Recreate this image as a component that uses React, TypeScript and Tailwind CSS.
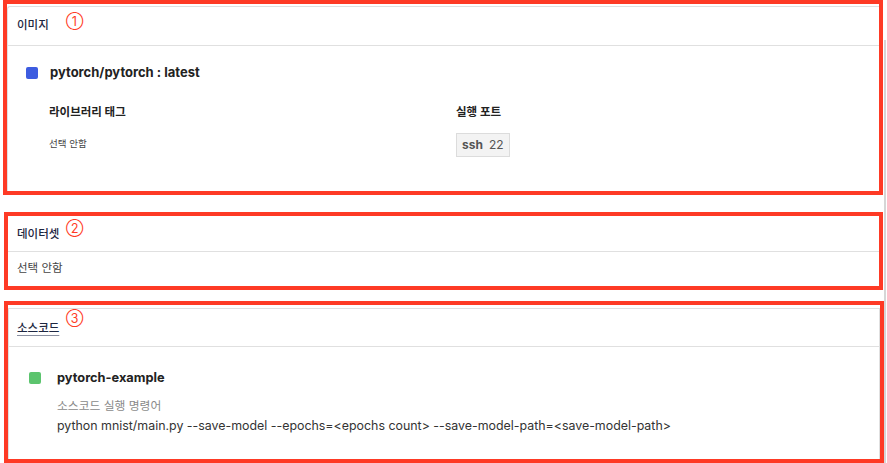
import React from 'react';

const font = { fontFamily: 'Inter, "Noto Sans CJK KR", sans-serif' };

const Mark: React.FC<{ n: string; className?: string }> = ({ n, className = '' }) => (
  <span className={`absolute text-[12.5px] leading-none text-[#ff3b25] ${className}`}>{n}</span>
);

export default function App() {
  return (
    <div className="w-[887px] h-[463px] bg-white flex overflow-hidden text-[#222]" style={font}>
      <div className="w-[884px] flex flex-col">
        {/* 이미지 */}
        <section className="relative ml-[3px] w-[880px] h-[195px] border-4 border-[#fe3a25] pt-[2px]">
          <div className="h-full border-t border-l border-[#e0e0e0] rounded-tl-[3px]">
            <div className="h-[39px] border-b border-[#e0e0e0] flex items-center pl-[9px]">
              <span className="text-[11.5px] font-medium text-[#1d2640]">이미지</span>
            </div>
            <div className="pt-[18px] pl-[18px]">
              <div className="flex items-center gap-[12px] h-[18px]">
                <span className="w-[12px] h-[12px] rounded-[2px] bg-[#3d5ce0]" />
                <span className="text-[13px] font-bold text-[#222]">pytorch/pytorch : latest</span>
              </div>
              <div className="mt-[21px] pl-[23px] grid grid-cols-[407px_1fr] gap-y-[10px] items-center">
                <div className="text-[11.5px] font-bold leading-[18px]">라이브러리 태그</div>
                <div className="text-[11.5px] font-bold leading-[18px]">실행 포트</div>
                <div className="text-[9.5px] text-[#444]">선택 안함</div>
                <div>
                  <span className="inline-flex items-center h-[24px] px-[5px] gap-[6px] bg-[#f3f3f3] border border-[#dcdcdc] text-[12px] text-[#555]">
                    <span className="font-bold">ssh</span>
                    <span>22</span>
                  </span>
                </div>
              </div>
            </div>
          </div>
          <Mark n="①" className="left-[59px] top-[12px]" />
        </section>

        {/* 데이터셋 */}
        <section className="relative mt-[17px] ml-[4px] w-[879px] h-[78px] border-4 border-[#fe3a25]">
          <div className="h-[36px] border-b border-[#e0e0e0] flex items-center pl-[9px] pt-[2px]">
            <span className="text-[11.5px] font-medium text-[#1d2640]">데이터셋</span>
          </div>
          <div className="h-[34px] flex items-center pl-[9px] text-[11.5px] text-[#444]">선택 안함</div>
          <Mark n="②" className="left-[58px] top-[7px]" />
        </section>

        {/* 소스코드 */}
        <section className="relative mt-[11px] ml-[4px] w-[880px] h-[162px] border-4 border-[#fe3a25] pt-[3px]">
          <div className="h-full border border-b-0 border-[#e0e0e0]">
            <div className="h-[38px] border-b border-[#e0e0e0] flex items-center pl-[8px] pt-[2px]">
              <span className="text-[11.5px] font-medium text-[#1d2640] underline underline-offset-[3px] decoration-[#8a8fa0]">소스코드</span>
            </div>
            <div className="pt-[22px] pl-[20px]">
              <div className="flex items-center gap-[16px] h-[18px]">
                <span className="w-[12px] h-[12px] rounded-[2px] bg-[#5cc46e]" />
                <span className="text-[12.8px] font-bold text-[#222]">pytorch-example</span>
              </div>
              <div className="pl-[28px] mt-[11px] text-[11.8px] leading-[16px] text-[#8a8a8a]">소스코드 실행 명령어</div>
              <div className="pl-[28px] mt-[4px] text-[12.4px] leading-[16px] text-[#333]">
                python mnist/main.py --save-model --epochs=&lt;epochs count&gt; --save-model-path=&lt;save-model-path&gt;
              </div>
            </div>
          </div>
          <Mark n="③" className="left-[58px] top-[8px]" />
        </section>
      </div>
      <div className="w-[2px] mt-[40px] bg-[#d6d6d6]" />
    </div>
  );
}
